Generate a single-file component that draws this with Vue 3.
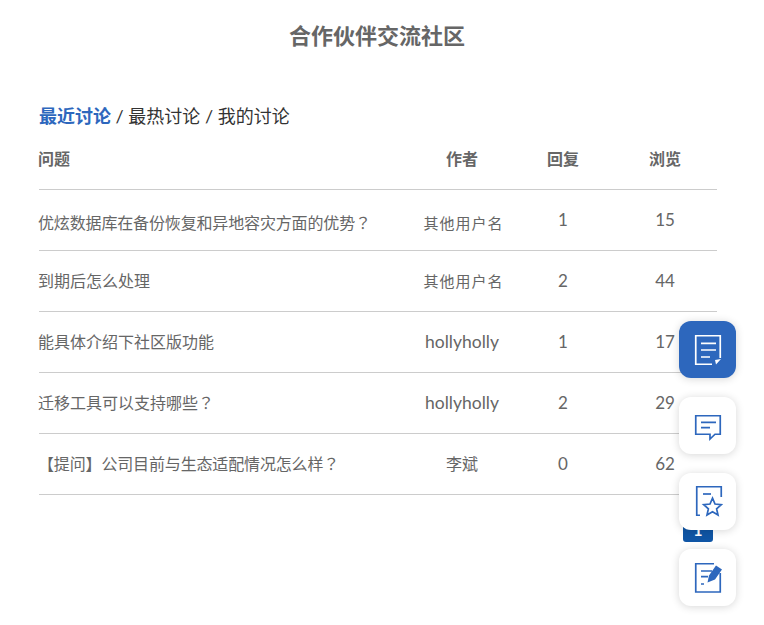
<script setup>
const rows = [
  { q: '优炫数据库在备份恢复和异地容灾方面的优势', mark: '？', a: '其他用户名', r: 1, v: 15, cjk: true, tight: true },
  { q: '到期后怎么处理', mark: '', a: '其他用户名', r: 2, v: 44, cjk: true },
  { q: '能具体介绍下社区版功能', mark: '', a: 'hollyholly', r: 1, v: 17 },
  { q: '迁移工具可以支持哪些', mark: '？', a: 'hollyholly', r: 2, v: 29 },
  { q: '【提问】公司目前与生态适配情况怎么样', mark: '？', a: '李斌', r: 0, v: 62, tight: true, name: true },
]
</script>

<template>
  <div class="page">
    <h1 class="title">合作伙伴交流社区</h1>
    <div class="tabs"><b class="on">最近讨论</b> / 最热讨论 / 我的讨论</div>
    <div class="table">
      <div class="row head">
        <span class="q">问题</span><span>作者</span><span>回复</span><span>浏览</span>
      </div>
      <div v-for="(row, i) in rows" :key="row.q" class="row body" :class="{ first: i === 0 }">
        <span class="q" :class="{ tight: row.tight }">{{ row.q }}<i class="mark">{{ row.mark }}</i></span>
        <span class="author" :class="{ cjk: row.cjk, name: row.name }">{{ row.a }}</span>
        <span class="num">{{ row.r }}</span>
        <span class="num">{{ row.v }}</span>
      </div>
    </div>

    <div class="pager">1</div>
    <div class="float">
      <button class="fb active">
        <svg width="31" height="33" viewBox="0 0 31 33" fill="none" stroke="#fff" stroke-width="1.7">
          <path d="M28.250 25V2.750H3.750V31.250H20" />
          <path d="M9 10.300h15M9 17h15M9 24h9" />
          <path d="M23 27l6-1-5 5.500z" fill="#fff" stroke="none" />
        </svg>
      </button>
      <button class="fb">
        <svg width="31" height="33" viewBox="0 0 31 33" fill="none" stroke="#2d67bd" stroke-width="1.700">
          <path d="M3.750 6.750H28.250V25.250H23L18 30V25.250H3.750Z" />
          <path d="M9 13.300h15M9 18.700h9" />
        </svg>
      </button>
      <button class="fb">
        <svg width="31" height="33" viewBox="0 0 31 33" fill="none" stroke="#2d67bd" stroke-width="1.700">
          <path d="M8 30.250H4.750V1.750H29.250V12" />
          <path d="M11 9h8" />
          <path d="M20.500 13.200L23 19l6.300.6-4.700 4.200L26 30l-5.500-3.200L15 30l1.400-6.200-4.700-4.200L18 19Z" />
        </svg>
      </button>
      <button class="fb">
        <svg width="31" height="33" viewBox="0 0 31 33" fill="none" stroke="#2d67bd" stroke-width="1.700">
          <path d="M22 2.750H3.750V31H28.250V12" />
          <path d="M9 10h11M9 15.700h7M9 23h3" />
          <path d="M15.500 21.500l1.500-7L24 4.500 30 8.500 23 18.500z" fill="#2d67bd" stroke="none" />
        </svg>
      </button>
    </div>
  </div>
</template>

<style>
html, body { margin: 0; background: #fff; }
</style>

<style scoped>
.page {
  position: relative;
  width: 764px;
  height: 625px;
  overflow: hidden;
  box-sizing: border-box;
  padding: 0 47px 0 39px;
  font-family: "Lato", "Noto Sans CJK SC", sans-serif;
  color: #666;
}
.title {
  margin: 0;
  padding: 19px 0 0 0;
  height: 99px;
  box-sizing: border-box;
  line-height: 34px;
  font-size: 22px;
  font-weight: 700;
  color: #666;
  text-align: center;
  text-indent: -2px;
}
.tabs {
  height: 34px;
  line-height: 34px;
  font-size: 18px;
  color: #333;
}
.on { color: #2d67bd; font-weight: 700; }
.row {
  display: grid;
  grid-template-columns: 347px 152px 50px 1fr;
  align-items: center;
  border-bottom: 1px solid #ccc;
  font-size: 16px;
  color: #666;
}
.body { height: 58px; padding-bottom: 2px; }
.row > span { text-align: center; }
.row > span:last-child { width: 50px; margin-left: 52px; }
.row > .q { text-align: left; white-space: nowrap; margin-left: -1px; }
.row > .q.tight { letter-spacing: -.15px; }
.mark { font-family: "Noto Sans CJK TC", sans-serif; font-style: normal; }
.author { font-size: 17.500px; }
.author.cjk { font-size: 15px; letter-spacing: 1px; padding-left: 3px; }
.author.name { font-size: 16px; }
.first .q, .first .author { padding-top: 6px; }
.num { font-size: 17px; }
.head { height: 39px; padding-top: 17px; font-weight: 700; align-items: start; line-height: 18px; }
.pager {
  position: absolute;
  left: 683px;
  top: 512px;
  width: 30px;
  height: 30px;
  border-radius: 3px;
  background: #0f55a5;
  color: #fff;
  font-size: 16px;
  font-weight: 700;
  line-height: 36px;
  text-align: center;
}
.float {
  position: absolute;
  left: 679px;
  top: 321px;
  display: flex;
  flex-direction: column;
  gap: 19px;
}
.fb {
  display: flex;
  align-items: center;
  justify-content: center;
  width: 57px;
  height: 57px;
  padding: 0;
  border: 0;
  border-radius: 12px;
  background: #fff;
  box-shadow: 0 1px 8px rgba(0, 0, 0, .16);
}
.fb.active { background: #2d67bd; }
</style>
